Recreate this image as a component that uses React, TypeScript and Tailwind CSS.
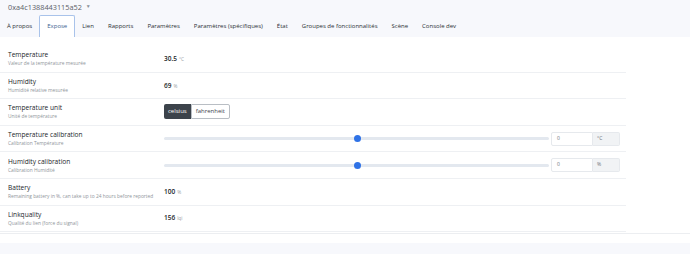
import React from "react";

const tabs = [
  "À propos",
  "Expose",
  "Lien",
  "Rapports",
  "Paramètres",
  "Paramètres (spécifiques)",
  "État",
  "Groupes de fonctionnalités",
  "Scène",
  "Console dev",
];

function Label({ title, desc }: { title: string; desc: string }) {
  return (
    <div className="w-[164px] shrink-0 pl-[8px] flex flex-col justify-center">
      <div className="text-[6.6px] leading-[9px] font-medium text-[#212529]">{title}</div>
      <div className="text-[4.85px] leading-[8px] text-[#8f959b] whitespace-nowrap">{desc}</div>
    </div>
  );
}

function Value({ v, unit }: { v: string; unit: string }) {
  return (
    <div className="flex items-baseline gap-[2px] text-[#212529]">
      <span className="text-[6.5px] font-semibold">{v}</span>
      <span className="text-[4.8px] text-[#9aa0a6]">{unit}</span>
    </div>
  );
}

function Slider({ unit }: { unit: string }) {
  return (
    <div className="flex items-center">
      <div className="relative w-[385px] h-[3px] rounded-full bg-[#e3e8ef]">
        <div className="absolute left-[190px] top-[-2px] w-[7px] h-[7px] rounded-full bg-[#2f72e6]" />
      </div>
      <div className="ml-[2px] flex h-[14px] text-[5px]">
        <div className="w-[42px] border border-[#e6e9ed] rounded-l-[2px] bg-white pl-[5px] flex items-center text-[#6b7178]">0</div>
        <div className="w-[27px] border border-l-0 border-[#e6e9ed] rounded-r-[2px] bg-[#f1f3f5] pl-[4px] flex items-center text-[#6b7178]">{unit}</div>
      </div>
    </div>
  );
}

function Row({ children }: { children: React.ReactNode }) {
  return <div className="flex items-center h-[26.6px] border-b border-[#eef0f3]">{children}</div>;
}

export default function App() {
  return (
    <div
      className="w-[690px] h-[254px] bg-[#f7f8fc] overflow-hidden"
      style={{ fontFamily: '"Open Sans", "Noto Sans", sans-serif' }}
    >
      <div className="h-[13px] pl-[8px] pt-[1px] flex items-center gap-[4px] text-[7.3px] text-[#5b6168]">
        <span>0xa4c1388443115a52</span>
        <span className="text-[5px] text-[#8a9097]">▼</span>
      </div>
      <div className="flex h-[24px] pt-[2px] text-[6px] text-[#2b3035]">
        {tabs.map((t) => (
          <div
            key={t}
            className={
              "px-[7px] flex items-center whitespace-nowrap " +
              (t === "Expose"
                ? "bg-white border border-b-0 border-[#a9c3ea] rounded-t-[2px] text-[#3d5f8f]"
                : "")
            }
          >
            {t}
          </div>
        ))}
      </div>
      <div className="bg-white">
        <div className="pt-[9px] w-[626px]">
          <Row>
            <Label title="Temperature" desc="Valeur de la température mesurée" />
            <Value v="30.5" unit="°C" />
          </Row>
          <Row>
            <Label title="Humidity" desc="Humidité relative mesurée" />
            <Value v="69" unit="%" />
          </Row>
          <Row>
            <Label title="Temperature unit" desc="Unité de température" />
            <div className="flex h-[15px] text-[6px]">
              <div className="px-[4px] flex items-center bg-[#3c434b] text-white rounded-l-[2px]">celsius</div>
              <div className="px-[4px] flex items-center border border-[#b9bec4] text-[#3c434b] rounded-r-[2px]">fahrenheit</div>
            </div>
          </Row>
          <Row>
            <Label title="Temperature calibration" desc="Calibration Température" />
            <Slider unit="°C" />
          </Row>
          <Row>
            <Label title="Humidity calibration" desc="Calibration Humidité" />
            <Slider unit="%" />
          </Row>
          <Row>
            <Label title="Battery" desc="Remaining battery in %, can take up to 24 hours before reported" />
            <Value v="100" unit="%" />
          </Row>
          <Row>
            <Label title="Linkquality" desc="Qualité du lien (force du signal)" />
            <Value v="156" unit="lqi" />
          </Row>
        </div>
        <div className="mt-[1px] border-t border-[#eceef1] h-[10px]" />
      </div>
    </div>
  );
}
